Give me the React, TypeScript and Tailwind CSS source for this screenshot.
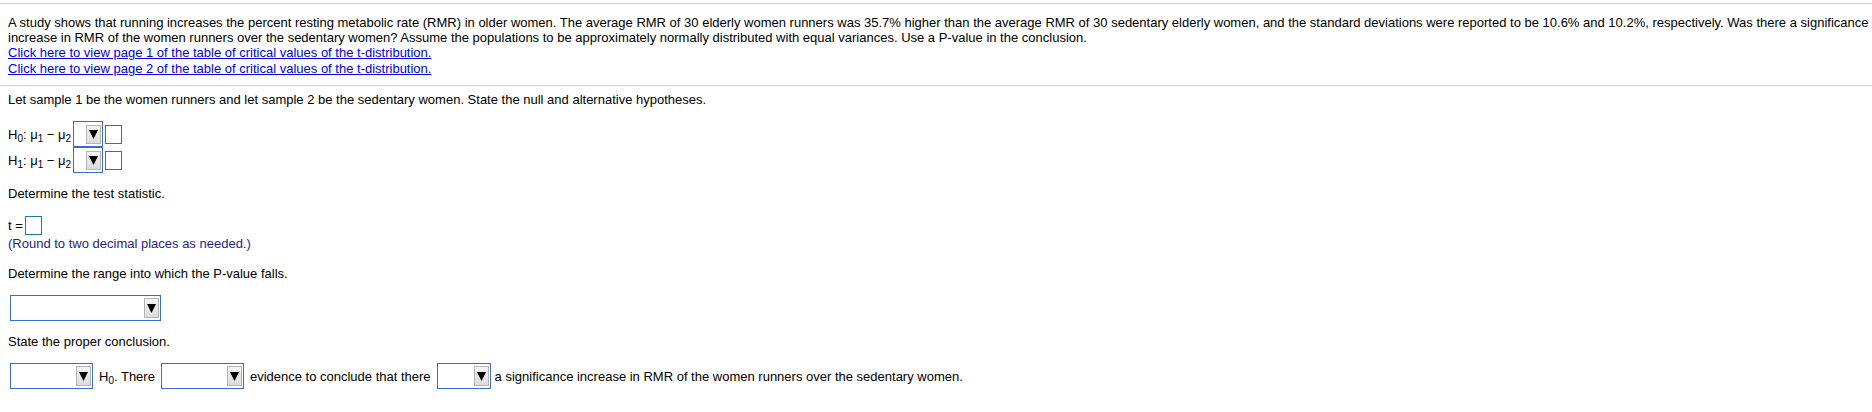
import type { ReactNode } from 'react';

const Arrow = () => (
  <svg width="9" height="9" viewBox="0 0 9 9">
    <polygon points="0,0 9,0 4.5,9" fill="#000" />
  </svg>
);

const Dropdown = ({ width, btnH = 'h-[20px]' }: { width: string; btnH?: string }) => (
  <div className={`${width} h-[26px] shrink-0 border border-[#3a6ad4] bg-white flex items-center justify-end pr-[1px]`}>
    <div
      className={`w-[15px] ${btnH} border border-[#b4b4b4] bg-gradient-to-b from-[#f4f4f4] to-[#dcdcdc] flex items-center justify-center`}
    >
      <Arrow />
    </div>
  </div>
);

const Box = ({ className = '' }: { className?: string }) => (
  <div className={`w-[17px] h-[19px] shrink-0 border border-[#1e7c9c] bg-white ${className}`} />
);

const Sub = ({ children }: { children: ReactNode }) => (
  <sub className="text-[10px] leading-none relative top-[3px] align-baseline">{children}</sub>
);

const Hypothesis = ({ n }: { n: string }) => (
  <div className="flex items-center h-[26px]">
    <span className="w-[65px] text-[13px]">
      H<Sub>{n}</Sub>: μ<Sub>1</Sub> − μ<Sub>2</Sub>
    </span>
    <Dropdown width="w-[30px]" btnH="h-[19px]" />
    <Box className="ml-[2px] w-[16px]" />
  </div>
);

export default function App() {
  return (
    <div className="min-h-[412px] bg-white text-black text-[13px] leading-[15px] font-['Liberation_Sans_Narrow','Liberation_Sans',Arial,sans-serif]">
      <div className="mt-[3px] border-y border-[#cfcfd6] pl-[8px] pr-[3px] pt-[11px] pb-[8px]">
        <p>
          A study shows that running increases the percent resting metabolic rate (RMR) in older women. The average RMR of
          30 elderly women runners was 35.7% higher than the average RMR of 30 sedentary elderly women, and the standard
          deviations were reported to be 10.6% and 10.2%, respectively. Was there a significance increase in RMR of the
          women runners over the sedentary women? Assume the populations to be approximately normally distributed with
          equal variances. Use a P-value in the conclusion.
        </p>
        <a href="#" className="block w-fit leading-[16px] text-[#0000ee] underline">
          Click here to view page 1 of the table of critical values of the t-distribution.
        </a>
        <a href="#" className="block w-fit leading-[16px] text-[#0000ee] underline">
          Click here to view page 2 of the table of critical values of the t-distribution.
        </a>
      </div>

      <div className="px-[8px] pt-[6px]">
        <p>Let sample 1 be the women runners and let sample 2 be the sedentary women. State the null and alternative hypotheses.</p>

        <div className="mt-[14px] flex flex-col">
          <Hypothesis n="0" />
          <Hypothesis n="1" />
        </div>

        <p className="mt-[13px]">Determine the test statistic.</p>

        <div className="mt-[15px] flex items-center h-[19px]">
          <span className="w-[17px]">t =</span>
          <Box />
        </div>
        <p className="mt-[1px] text-[#262680]">(Round to two decimal places as needed.)</p>

        <p className="mt-[15px]">Determine the range into which the P-value falls.</p>

        <div className="mt-[14px] ml-[2px]">
          <Dropdown width="w-[151px]" />
        </div>

        <p className="mt-[13px]">State the proper conclusion.</p>

        <div className="mt-[14px] ml-[2px] flex items-center gap-[6px] whitespace-nowrap">
          <Dropdown width="w-[83px]" />
          <span>
            H<Sub>0</Sub>. There
          </span>
          <Dropdown width="w-[83px]" />
          <span>evidence to conclude that there</span>
          <Dropdown width="w-[54px]" />
          <span className="-ml-[2px]">a significance increase in RMR of the women runners over the sedentary women.</span>
        </div>
      </div>
    </div>
  );
}
